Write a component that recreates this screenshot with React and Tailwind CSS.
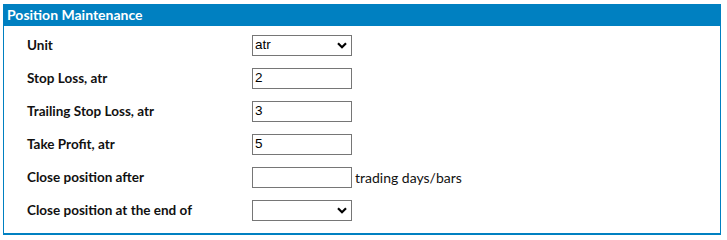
import React from 'react'

const rows = [
  { label: 'Unit', type: 'select', value: 'atr' },
  { label: 'Stop Loss, atr', type: 'input', value: '2' },
  { label: 'Trailing Stop Loss, atr', type: 'input', value: '3' },
  { label: 'Take Profit, atr', type: 'input', value: '5' },
  { label: 'Close position after', type: 'input', value: '', suffix: 'trading days/bars' },
  { label: 'Close position at the end of', type: 'select', value: '' },
]

const Chevron = () => (
  <svg width="10" height="7" viewBox="0 0 10 7" className="shrink-0">
    <path d="M1 1.2 L5 5.2 L9 1.2" fill="none" stroke="#000" strokeWidth="2.2" />
  </svg>
)

const App = () => {
  return (
    <div className="w-[727px] h-[240px] bg-white pt-[4px] pl-[3px]" style={{ fontFamily: 'Lato, "Liberation Sans", sans-serif' }}>
      <div className="w-[718px] border border-[#0080c1] border-t-0 border-b-2">
        <div className="h-[22px] bg-[#0080c1] text-white font-bold text-[14px] leading-[22px] pl-[3px]">
          Position Maintenance
        </div>
        <div className="flex flex-col gap-3 pt-[9px] pb-[12px] pl-[23px]">
          {rows.map((row) => (
            <div key={row.label} className="flex items-center h-[21px]">
              <div className="w-[225px] text-[13.5px] font-bold text-[#111]">{row.label}</div>
              {row.type === 'select' ? (
                <div className="w-[100px] h-[21px] border border-[#767676] flex items-center justify-between pl-[2px] pr-[4px] text-[13.5px] text-black" style={{ fontFamily: '"Liberation Sans", Arial, sans-serif' }}>
                  <span>{row.value}</span>
                  <Chevron />
                </div>
              ) : (
                <div className="w-[100px] h-[21px] border border-[#767676] flex items-center pl-[2px] text-[13.5px] text-black" style={{ fontFamily: '"Liberation Sans", Arial, sans-serif' }}>
                  {row.value}
                </div>
              )}
              {row.suffix && <span className="ml-[3px] text-[14px] text-[#111]">{row.suffix}</span>}
            </div>
          ))}
        </div>
      </div>
    </div>
  )
}

export default App
